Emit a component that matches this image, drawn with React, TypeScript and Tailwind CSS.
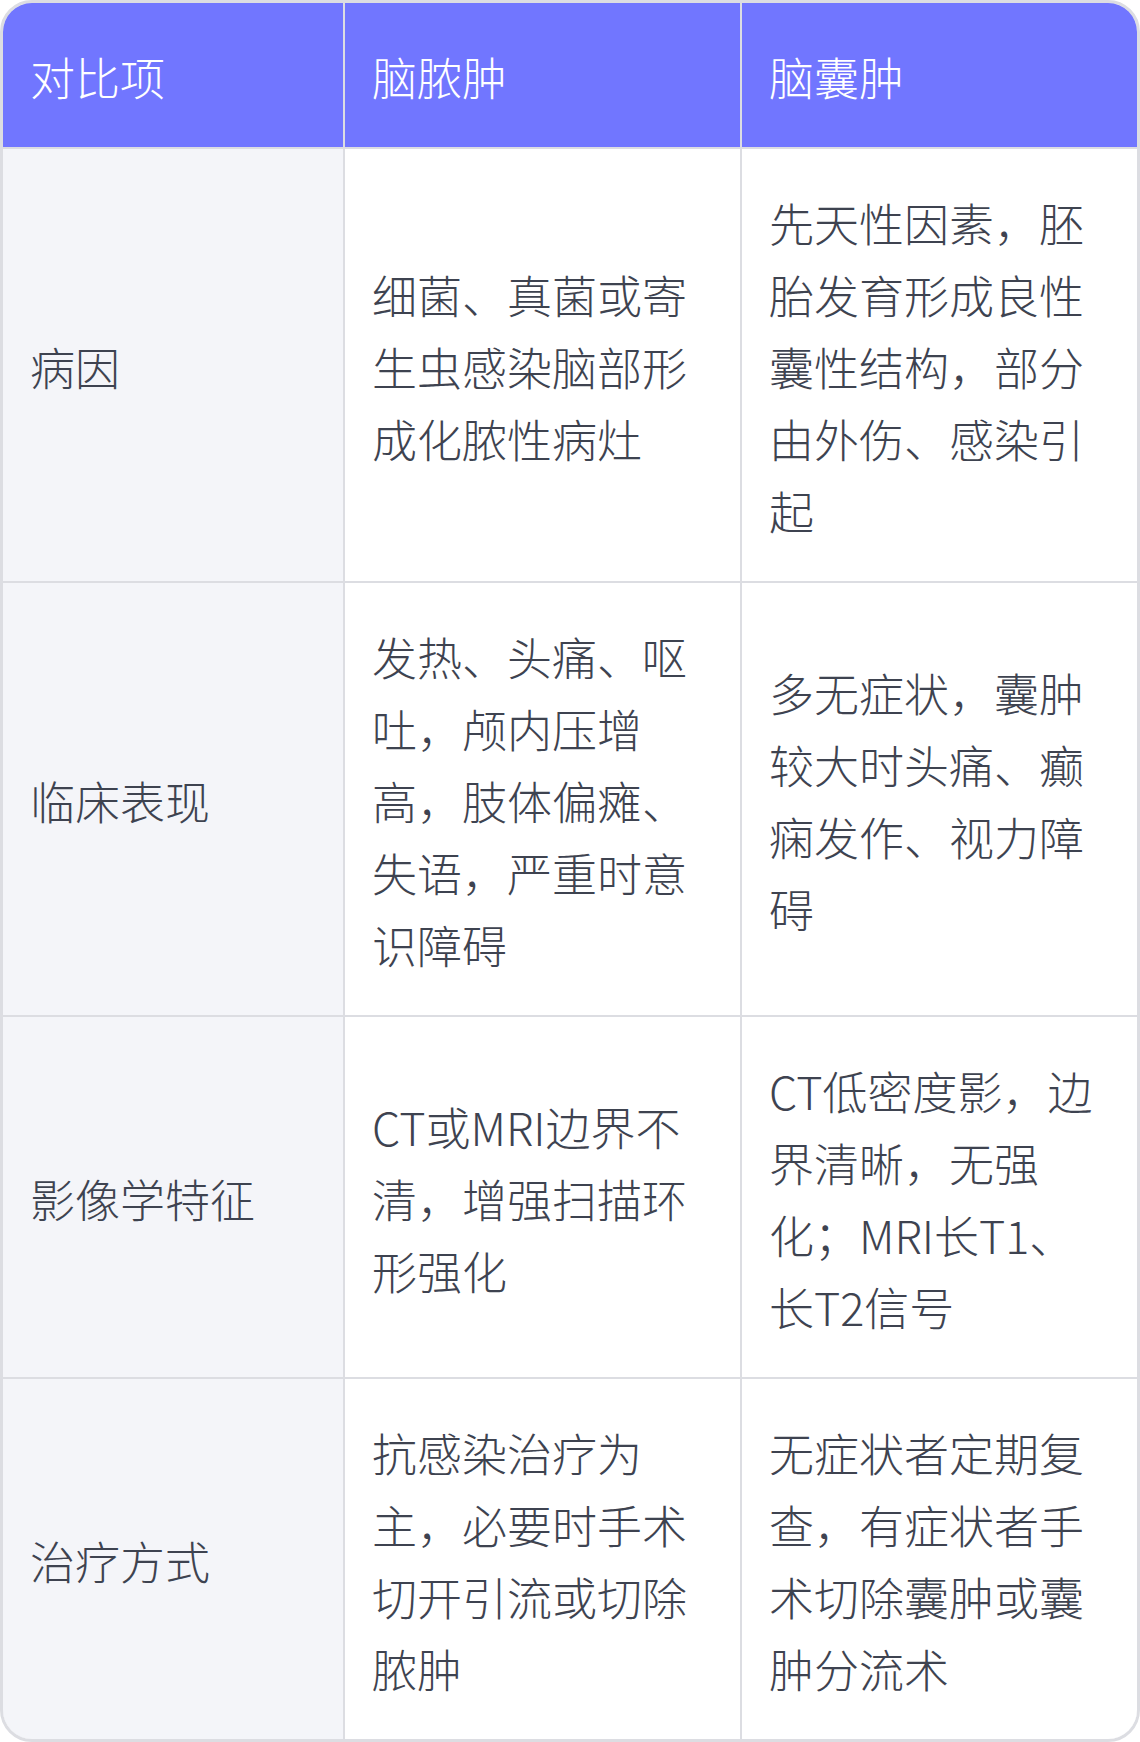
import React from 'react';

type Row = { label: string; abscess: string; cyst: string };

const rows: Row[] = [
  {
    label: '病因',
    abscess: '细菌、真菌或寄生虫感染脑部形成化脓性病灶',
    cyst: '先天性因素，胚胎发育形成良性囊性结构，部分由外伤、感染引起',
  },
  {
    label: '临床表现',
    abscess: '发热、头痛、呕吐，颅内压增高，肢体偏瘫、失语，严重时意识障碍',
    cyst: '多无症状，囊肿较大时头痛、癫痫发作、视力障碍',
  },
  {
    label: '影像学特征',
    abscess: 'CT或MRI边界不清，增强扫描环形强化',
    cyst: 'CT低密度影，边界清晰，无强化；MRI长T1、长T2信号',
  },
  {
    label: '治疗方式',
    abscess: '抗感染治疗为主，必要时手术切开引流或切除脓肿',
    cyst: '无症状者定期复查，有症状者手术切除囊肿或囊肿分流术',
  },
];

const cell = 'pl-[27px] pr-[29px] pt-[38px] pb-[34px] flex items-center';

const App: React.FC = () => {
  return (
    <div
      className="w-[1140px] bg-white text-[45px] leading-[72px] font-extralight text-[#3e4350]"
      style={{ fontFamily: '"Noto Sans CJK SC", "Noto Sans", sans-serif' }}
    >
      <div className="border-[3px] border-[#dcdde2] rounded-[32px] overflow-hidden">
        <div className="grid grid-cols-[340px_395px_395px] gap-[2px] bg-[#dcdde2]">
          {/* 表头 */}
          <div className={`${cell} bg-[#7176ff] text-white`}>对比项</div>
          <div className={`${cell} bg-[#7176ff] text-white`}>脑脓肿</div>
          <div className={`${cell} bg-[#7176ff] text-white`}>脑囊肿</div>

          {rows.map((r) => (
            <React.Fragment key={r.label}>
              <div className={`${cell} bg-[#f4f5f9]`}>{r.label}</div>
              <div className={`${cell} bg-white`}>
                <span>{r.abscess}</span>
              </div>
              <div className={`${cell} bg-white`}>
                <span>{r.cyst}</span>
              </div>
            </React.Fragment>
          ))}
        </div>
      </div>
    </div>
  );
};

export default App;
